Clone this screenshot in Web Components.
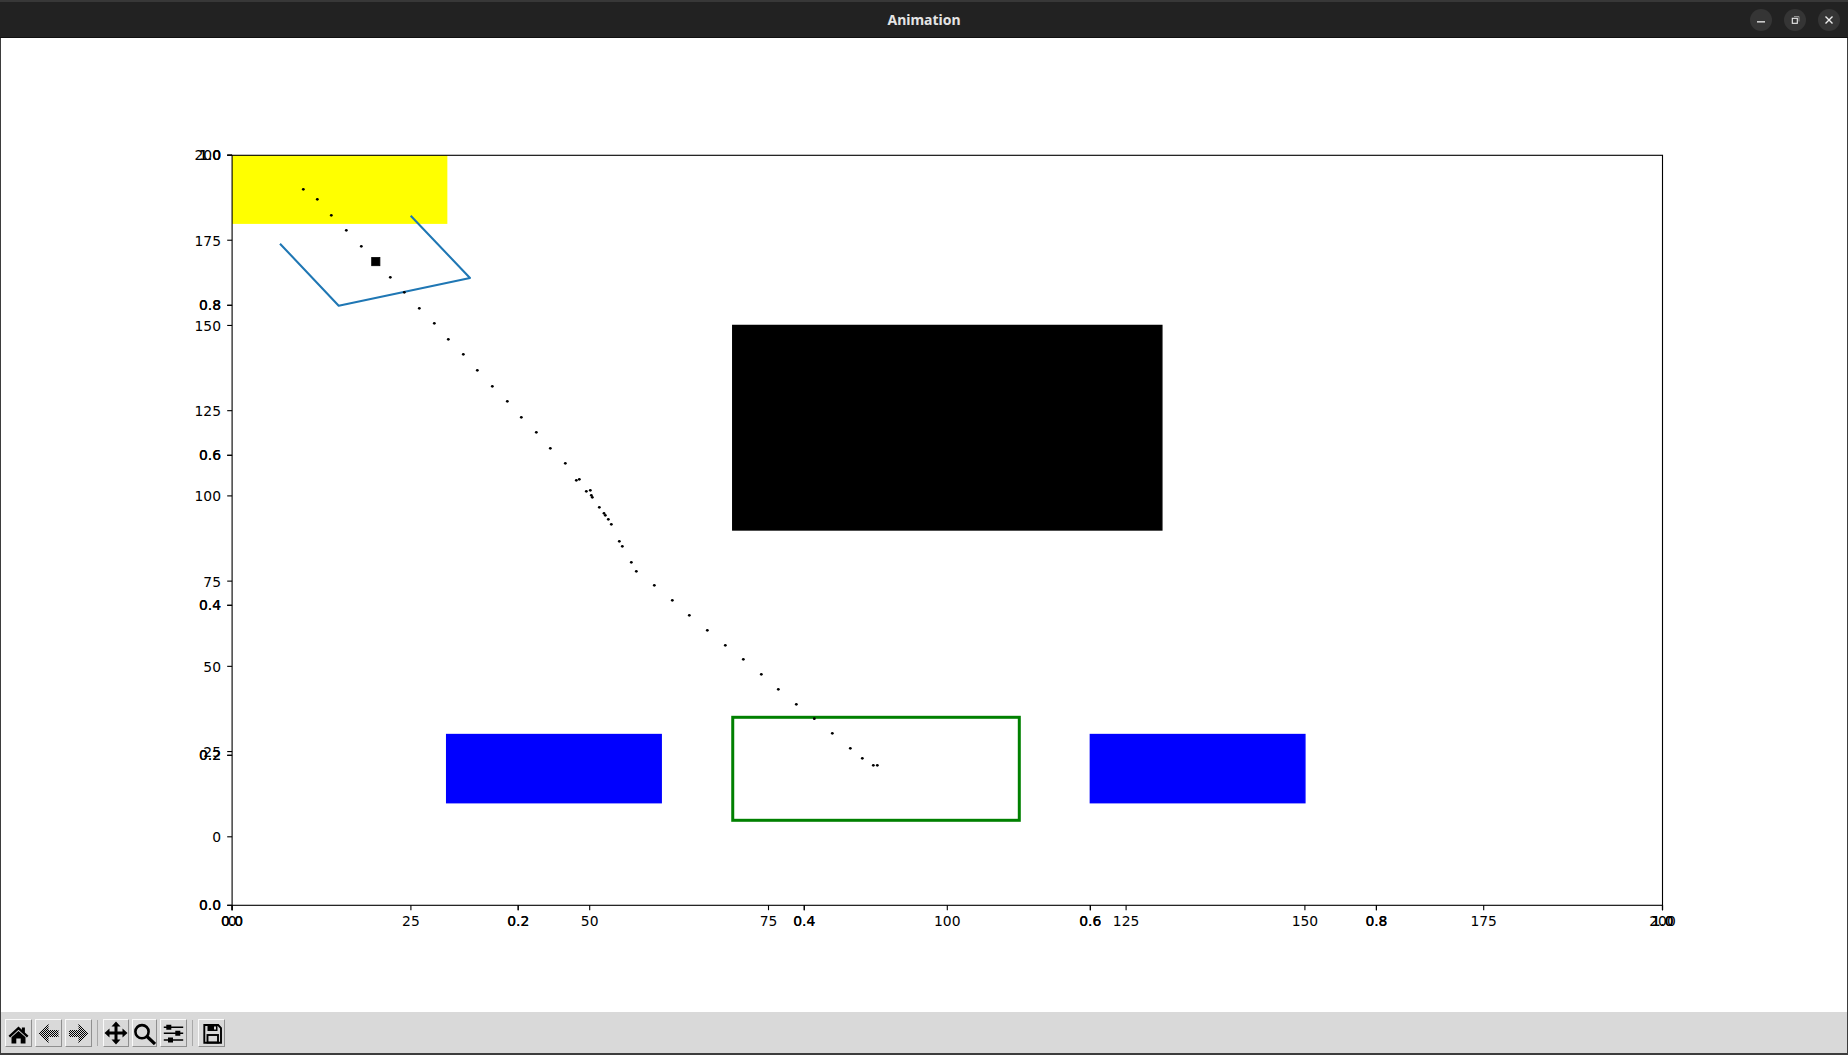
<!DOCTYPE html>
<html lang="en">
<head>
<meta charset="utf-8">
<title>Animation</title>
<style>
html,body{margin:0;padding:0;height:100%;overflow:hidden;background:#fff}
</style>
</head>
<body>
<app-window>
  <title-bar slot="title">Animation</title-bar>
  <plot-canvas></plot-canvas>
  <nav-toolbar slot="toolbar"></nav-toolbar>
</app-window>

<script>
class AppWindow extends HTMLElement{
  constructor(){super();this.attachShadow({mode:'open'}).innerHTML=`
  <style>
    :host{display:flex;flex-direction:column;width:1848px;height:1055px;box-sizing:border-box;border-left:1px solid #3d3d3d;border-right:1px solid #3d3d3d;border-bottom:2px solid #3d3d3d;background:#fff}
    ::slotted([slot=title]){flex:none;margin:0 -1px}
    .body{flex:1;min-height:0;display:flex}
    ::slotted([slot=toolbar]){flex:none}
  </style>
  <slot name="title"></slot>
  <div class="body"><slot></slot></div>
  <slot name="toolbar"></slot>`;}
}
customElements.define('app-window',AppWindow);

class WinButton extends HTMLElement{
  constructor(){super();this.attachShadow({mode:'open'}).innerHTML=`
  <style>
    :host{display:flex;width:22px;height:22px;border-radius:50%;background:#353535;align-items:center;justify-content:center}
    ::slotted(svg){display:block}
  </style><slot></slot>`;}
}
customElements.define('win-button',WinButton);

class TitleBar extends HTMLElement{
  constructor(){super();this.attachShadow({mode:'open'}).innerHTML=`
  <style>
    :host{display:grid;grid-template-columns:1fr auto 1fr;align-items:center;height:38px;box-sizing:border-box;background:#222;border-top:2px solid #383838;border-bottom:1px solid #111;color:#e4e4e4;font:700 14px "Noto Sans","Open Sans",sans-serif}
    .t{grid-column:2;position:relative;top:-.5px}
    .b{grid-column:3;justify-self:end;display:flex;gap:12px;padding-right:8px}
  </style>
  <span class="t"><slot></slot></span>
  <div class="b">
    <win-button><svg width="12" height="12" viewBox="0 0 12 12"><rect x="2" y="7.2" width="8" height="1.3" fill="#eee"/></svg></win-button>
    <win-button><svg width="12" height="12" viewBox="0 0 12 12" fill="none" stroke="#eee"><rect x="3.3" y="4.3" width="5" height="5" stroke-width="1.1"/><path d="M5 2.5H10V7.5" stroke-width=".8" stroke="#aaa"/></svg></win-button>
    <win-button><svg width="12" height="12" viewBox="0 0 12 12" fill="none" stroke="#eee" stroke-width="1.4"><path d="M2.5 2.5L9.5 9.5M9.5 2.5L2.5 9.5"/></svg></win-button>
  </div>`;}
}
customElements.define('title-bar',TitleBar);

class PlotCanvas extends HTMLElement{
  constructor(){
    super();
    const X=v=>232.1+7.152*v, Y=v=>836.8-3.409*v, U=v=>232.1+1430.4*v, V=v=>905.3-750*v;
    const dots=[[303.3,189.3],[317.3,199.3],[331.3,215.3],[346.3,230.3],[361.3,246.3],[390.3,277.3],[404.3,292.3],[419.3,308.3]];
    [[43,10],[85,58],[130,103],[172,151],[217,199],[262,244],[304,292],[349,337],[391,385],[436,430],[469,481],[478,478],[499,514],[511,511],[514,526],[517,532],[538,562],[552,580],[556,586],[565,598],[574,613],[598,664],[607,679],[634,727],[649,754],[703,796],[757,841],[808,886],[862,931],[916,976],[970,1018],[1024,1063],[1075,1108],[1129,1153],[1183,1196]].forEach(p=>dots.push([420+p[0]/3,320+p[1]/3]));
    [[337,100],[391,145],[427,175],[460,196],[472,196]].forEach(p=>dots.push([720+p[0]/3,700+p[1]/3]));
    let s='<defs><clipPath id="ax"><rect x="232.1" y="155.3" width="1430.4" height="750"/></clipPath></defs><g clip-path="url(#ax)">';
    const rect=(x0,y0,x1,y1,f)=>`<rect x="${x0}" y="${y0}" width="${x1-x0}" height="${y1-y0}" fill="${f}" stroke="${f}" stroke-width="1.39"/>`;
    s+=rect(X(0),155.3,X(30),Y(180),'#ff0');
    s+=rect(X(30),Y(30),X(60),Y(10),'#00f');
    s+=rect(X(120),Y(30),X(150),Y(10),'#00f');
    s+=rect(X(70),Y(150),X(130),Y(90),'#000');
    s+=`<rect x="${X(70)}" y="717.3" width="${1019.3-X(70)}" height="103" fill="none" stroke="#008000" stroke-width="3"/>`;
    s+=`<polyline points="280,243.7 338.7,305.7 470,278 410.7,215.7" fill="none" stroke="#1f77b4" stroke-width="2.08" stroke-linejoin="round"/>`;
    s+=`<rect x="371.7" y="257.5" width="8.2" height="8.2" fill="#000" stroke="#000" stroke-width=".8"/>`;
    dots.forEach(d=>s+=`<circle cx="${d[0]}" cy="${d[1]}" r="1.4" fill="#000"/>`);
    s+='</g>';
    s+=`<rect x="232.1" y="155.3" width="1430.4" height="750" fill="none" stroke="#000" stroke-width="1.11"/>`;
    const tx=(x,l,c)=>{s+=`<path d="M${x} 905.3v4.9" stroke="#000" stroke-width="1.11"/><text class="${c}" x="${x}" y="926.4" text-anchor="middle">${l}</text>`;};
    const ty=(y,l,c,o)=>{s+=`<path d="M232.1 ${y}h-4.9" stroke="#000" stroke-width="1.11"/><text class="${c}" x="221" y="${Math.round(y+o)}" text-anchor="end">${l}</text>`;};
    for(let v=0;v<=200;v+=25){tx(X(v),v,'');ty(Y(v),v,'',5.4);}
    for(let k=0;k<2;k++)for(let i=0;i<=5;i++){const l=(i/5).toFixed(1);tx(U(i/5),l,'dbl');ty(V(i/5),l,'dbl',4.7);}
    this.attachShadow({mode:'open'}).innerHTML=`
    <style>
      :host{display:block;flex:1;min-width:0;background:#fff}
      svg{display:block;width:100%;height:100%}
      text{font:13.89px "DejaVu Sans",sans-serif;fill:#000}
      text.dbl{stroke:#000;stroke-width:.1}
    </style>
    <svg viewBox="1 38 1846 974" preserveAspectRatio="xMinYMin meet">${s}</svg>`;
  }
}
customElements.define('plot-canvas',PlotCanvas);

class ToolButton extends HTMLElement{
  constructor(){super();this.attachShadow({mode:'open'}).innerHTML=`
  <style>
    :host{display:flex;box-sizing:border-box;width:var(--w,27px);height:28px;align-items:center;justify-content:center;background:#d9d9d9;border:1px solid;border-color:#fafafa #8f8f8f #8f8f8f #fafafa;overflow:hidden}
    ::slotted(svg){display:block;flex:none;width:24px;height:24px}
  </style><slot></slot>`;}
}
customElements.define('tool-button',ToolButton);

class NavToolbar extends HTMLElement{
  constructor(){
    super();
    const checker=id=>`<defs><pattern id="${id}" width="2" height="2" patternUnits="userSpaceOnUse"><rect width="1" height="1" fill="#000"/><rect x="1" y="1" width="1" height="1" fill="#000"/></pattern></defs>`;
    this.attachShadow({mode:'open'}).innerHTML=`
    <style>
      :host{display:flex;align-items:center;gap:3px;height:41px;box-sizing:border-box;padding:0 0 0 4px;background:#d9d9d9}
      .sep{width:1px;height:26px;background:#a8a8a8;margin:0 2px}
    </style>
    <tool-button><svg viewBox="0 0 24 24"><path d="M11.5 5.5L1.5 14.8l1.6 1.6 8.4-7.6 8.4 7.6 1.6-1.6-3.6-3.3V6.5h-3v2.2z M4.5 16.2l7-6.3 7 6.3V22.5h-4.8v-5h-4.4v5H4.5z" fill="#000"/></svg></tool-button>
    <tool-button><svg viewBox="0 0 24 24">${checker('pb')}<path d="M1.5 12.5L11.5 2.5V9H21.5V16H11.5V22.5Z" fill="url(#pb)"/></svg></tool-button>
    <tool-button><svg viewBox="0 0 24 24">${checker('pf')}<path d="M21.5 12.5L11.5 2.5V9H2V16H11.5V22.5Z" fill="url(#pf)"/></svg></tool-button>
    <div class="sep"></div>
    <tool-button style="--w:26px"><svg viewBox="0 0 24 24"><path d="M12 .5L16.5 5.5H13.5V10.5H18.5V7.5L23.5 12L18.5 16.5V13.5H13.5V18.5H16.5L12 23.5L7.5 18.5H10.5V13.5H5.5V16.5L.5 12L5.5 7.5V10.5H10.5V5.5H7.5Z" fill="#000"/></svg></tool-button>
    <tool-button style="--w:25px"><svg viewBox="0 0 24 24" fill="none" stroke="#000"><circle cx="9" cy="10.7" r="6.6" stroke-width="2.6"/><path d="M14 15.5L22 23" stroke-width="3.2"/></svg></tool-button>
    <tool-button><svg viewBox="0 0 24 24"><path d="M1.8 6.3H21.2M1.8 12.3H21.2M1.8 19H21.2" stroke="#000" stroke-width="1.4" fill="none"/><path d="M4.3 3.8h5v5h-5zM13.3 9.8h5v5h-5zM6 16.5h5v5H6z" fill="#000"/></svg></tool-button>
    <div class="sep"></div>
    <tool-button><svg viewBox="0 0 24 24"><path d="M4.3 4H18.2L21 7V21.7H4.3Z" fill="none" stroke="#000" stroke-width="1.9"/><path d="M7.5 4H17.5V10H7.5Z" fill="#000"/><path d="M14 5.5h2v3h-2z" fill="#d9d9d9"/><rect x="7.5" y="14" width="10.5" height="7.5" fill="none" stroke="#000" stroke-width="1.9"/></svg></tool-button>`;
  }
}
customElements.define('nav-toolbar',NavToolbar);
</script>
</body>
</html>
